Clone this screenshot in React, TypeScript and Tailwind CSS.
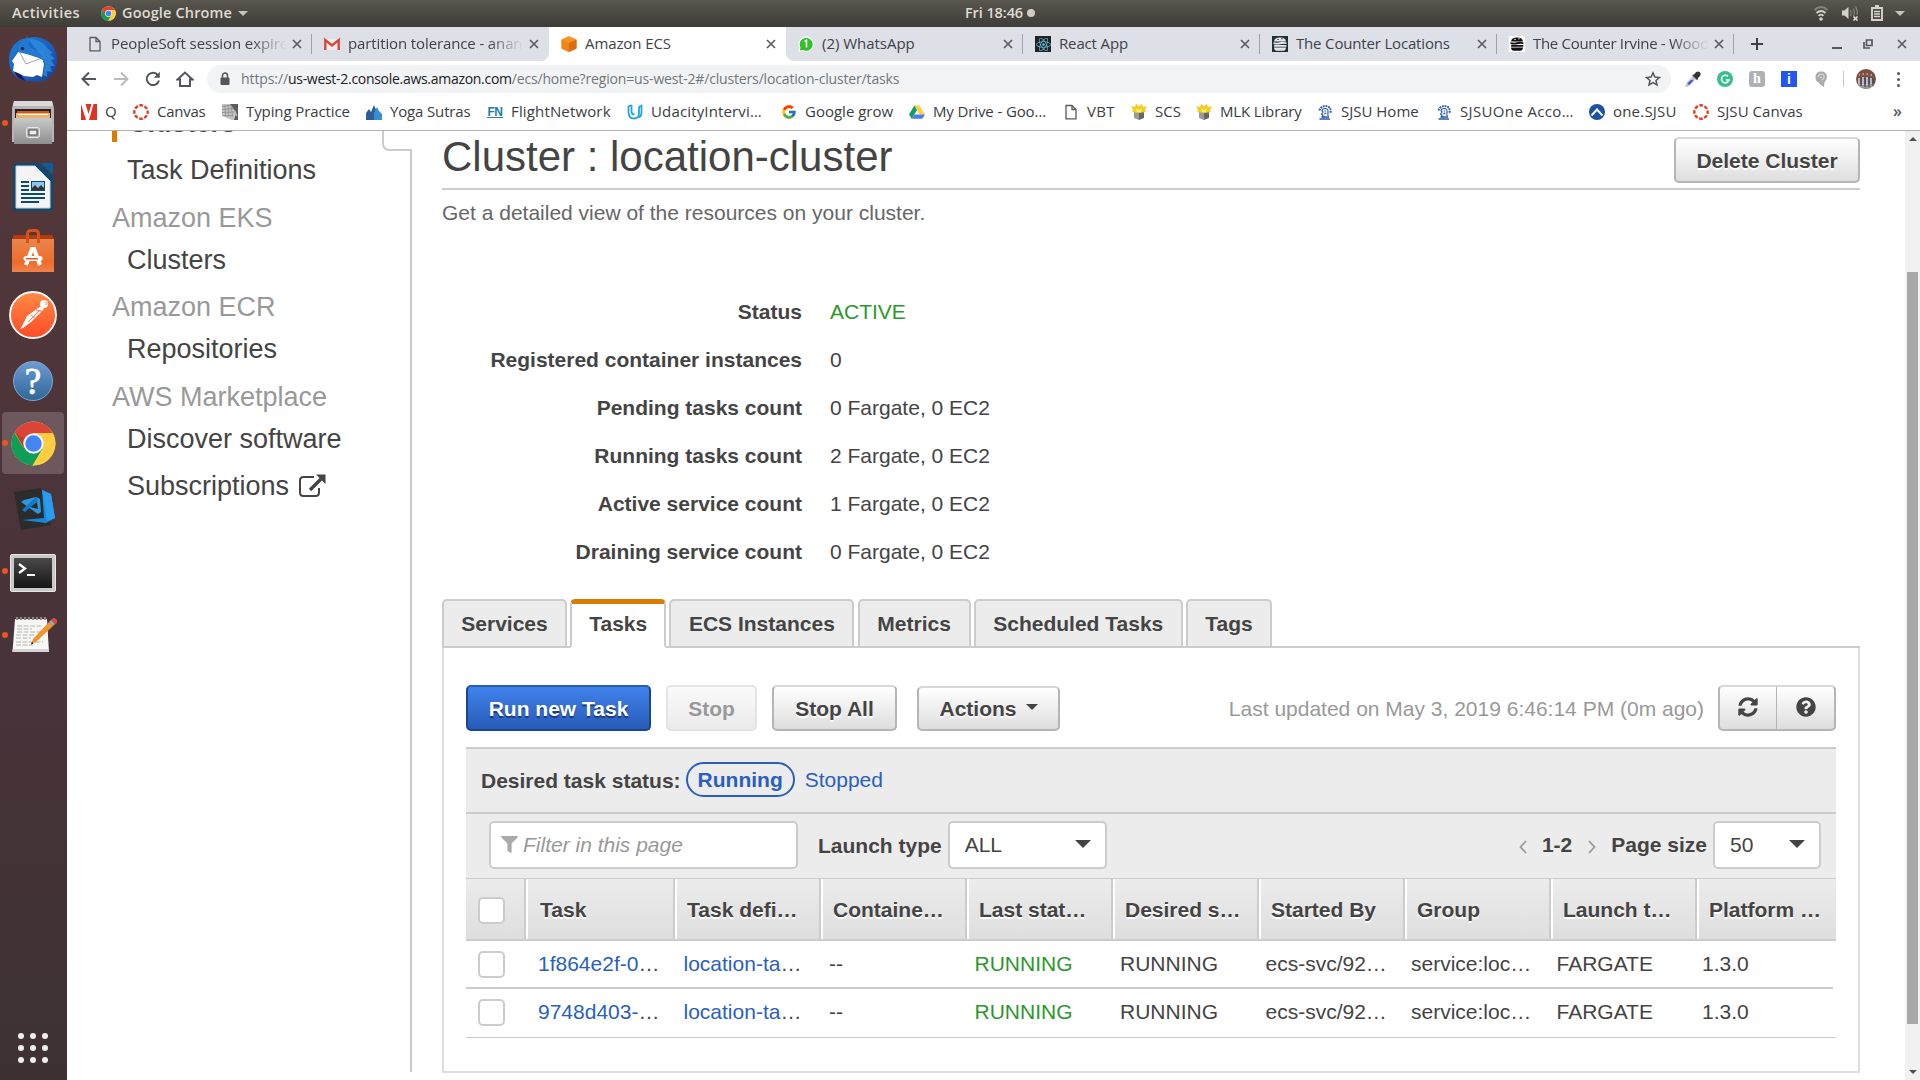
import React from "react";
import { FaFilter, FaQuestionCircle, FaSyncAlt, FaReact } from "react-icons/fa";
import { FcGoogle } from "react-icons/fc";

/* ---------- Icons ---------- */

const ChromeLogo = ({ className }: { className: string }) => (
  <svg viewBox="0 0 48 48" className={className}>
    <circle cx="24" cy="24" r="23.5" fill="#ffcd40" />
    <path d="M24 24 L3.6 12.3 A23.5 23.5 0 0 1 44.4 12.8 L24 12.8 Z" fill="#db4437" />
    <path d="M3.6 12.3 A23.5 23.5 0 0 0 23 47.5 L33.7 29.6 L24 24 L13.5 29 Z" fill="#0f9d58" />
    <path d="M24 12.8 H44.4 A23.5 23.5 0 0 1 23 47.5 L33.7 29.6 Z" fill="#ffcd40" />
    <path d="M4 12 L14 29.5 L24 24 Z" fill="#c33b2f" />
    <circle cx="24" cy="24" r="10.9" fill="#f4f4f4" />
    <circle cx="24" cy="24" r="8.7" fill="#4285f4" />
  </svg>
);

const Thunderbird = () => (
  <svg viewBox="0 0 48 48" className="size-12">
    <defs>
      <linearGradient id="tb" x1="0" y1="0" x2="1" y2="1">
        <stop offset="0" stopColor="#1b7fd6" />
        <stop offset="0.6" stopColor="#1c5dbd" />
        <stop offset="1" stopColor="#173b8c" />
      </linearGradient>
    </defs>
    <path d="M20 0 C18 1 17 2 17 3 C6 5 0 14 0 25 C0 36 6 42 12 45 L30 47 L34 44 L32 47 C42 44 48 35 48 25 C48 11 38 2 24 2 L17 3 Z" fill="url(#tb)" />
    <path d="M5 34 C6 41 10 44 17 46 C13 42 12 40 12 38 Z" fill="#26115c" />
    <path d="M10 16 L32 20 L35 29 L33 42 L28 40 L24 42 L15 41 L9 38 L4 36 L5 29 L3 26 Z" fill="#fff" />
    <path d="M10 16 L17 29 L33 23" fill="none" stroke="#9a9a9a" strokeWidth="0.9" />
    <path d="M9 17 C8 7 15 2 22 4 C17 8 19 13 30 16 C35 17 36 22 35 26 C30 22 20 20 9 17Z" fill="#2379d2" />
    <path d="M20 4 C30 4 36 9 39 14 L44 18 L41 19 L46 24 L42 25 L46 31 L41 31 L43 37 L38 36 L38 42 L34 40 L36 29 C35 18 24 14 20 4Z" fill="#2f8fdd" opacity="0.75" />
    <circle cx="13.5" cy="13.5" r="1.8" fill="#15304f" />
  </svg>
);

const Files = () => (
  <svg viewBox="0 0 42 44" className="h-11 w-[42px]">
    <defs>
      <linearGradient id="fi" x1="0" y1="0" x2="0" y2="1">
        <stop offset="0" stopColor="#c9c9c9" />
        <stop offset="1" stopColor="#8e8e8e" />
      </linearGradient>
    </defs>
    <path d="M2 0 H40 L42 7 V41 H0 V7 Z" fill="#b5b5b5" />
    <path d="M2 0 H40 L41 5 H1Z" fill="#dadada" />
    <rect x="3" y="8" width="36" height="10" fill="#222" />
    <rect x="5" y="10" width="32" height="8" fill="#d9531e" />
    <rect x="4" y="12" width="34" height="6" fill="#f0b26a" />
    <path d="M6 13.5H36" stroke="#fff" strokeWidth="1" />
    <rect x="2" y="17" width="38" height="26" fill="url(#fi)" />
    <rect x="14.5" y="26.500" width="13" height="10" rx="2" fill="#b4b4b4" stroke="#e9e9e9" />
    <rect x="17" y="29" width="8" height="5" fill="#eee" stroke="#444" />
  </svg>
);

const Writer = () => (
  <svg viewBox="0 0 40 48" className="h-12 w-10">
    <path d="M3 0 H26 L40 14 V45 a3 3 0 0 1 -3 3 H3 a3 3 0 0 1 -3 -3 V3 a3 3 0 0 1 3 -3Z" fill="#0b4a73" />
    <path d="M28 0 H40 V12 Z" fill="#0b5e97" />
    <path d="M3 3 H22 L37 18 V45 H3Z" fill="#f4f4f4" stroke="#cfcfcf" strokeWidth="1" />
    <rect x="18" y="18" width="14" height="10" fill="#0b4a73" />
    <rect x="19" y="19" width="12" height="8" fill="#8cc8ee" />
    <path d="M19 27 V25 L22 22 L25 25 L28 22 L31 25 V27Z" fill="#333" />
    <path d="M8 19H16 M8 23H16 M8 27H16 M8 31H32 M8 35H32 M8 39H26" stroke="#0b4a73" strokeWidth="1.8" />
  </svg>
);

const SoftwareCenter = () => (
  <svg viewBox="0 0 42 44" className="h-11 w-[42px]">
    <defs>
      <linearGradient id="sw" x1="0" y1="0" x2="0" y2="1">
        <stop offset="0" stopColor="#e8864a" />
        <stop offset="0.7" stopColor="#ee6c2c" />
        <stop offset="1" stopColor="#f0824a" />
      </linearGradient>
    </defs>
    <path d="M2 6 H40 L42 10 H0Z" fill="#b53c10" />
    <rect x="0" y="10" width="42" height="33" fill="url(#sw)" />
    <path d="M15.500 14 V5 q0 -3.500 3.500 -3.500 H23 q3.500 0 3.500 3.500 V14" fill="none" stroke="#d6521c" strokeWidth="3" />
    <path d="M14 36 L20 20 H22 L28 36" fill="none" stroke="#fff" strokeWidth="4" />
    <rect x="11.500" y="27" width="19" height="5" rx="2.500" fill="#fff" />
    <rect x="14" y="29" width="12" height="1.500" fill="#e65a1c" />
  </svg>
);

const Postman = () => (
  <svg viewBox="0 0 48 48" className="size-12">
    <defs>
      <linearGradient id="pm" x1="0" y1="0" x2="0" y2="1">
        <stop offset="0" stopColor="#ff8b45" />
        <stop offset="1" stopColor="#ff4b26" />
      </linearGradient>
    </defs>
    <circle cx="24" cy="24" r="23" fill="url(#pm)" stroke="#fff" strokeWidth="1.800" />
    <circle cx="35" cy="13" r="4" fill="#fff" />
    <path d="M36 10.500 L38 12.500 L36.500 14" stroke="#ff6c37" fill="none" />
    <path d="M32 15 L35 18 L22 31 L14 37 L11 38 L13 35 L18 25 Z" fill="#fff" />
    <path d="M31 19 L19 31 M27 19 L33 20 M22 24 L26 27" stroke="#ff6c37" strokeWidth="0.900" />
  </svg>
);

const Help = () => (
  <div className="mt-1 flex size-10 items-center justify-center rounded-full border border-[#7fa9d4] bg-linear-to-b from-[#6d9bd3] to-[#2c6797] font-['Liberation_Serif',serif] text-[37px] leading-none text-white [-webkit-text-stroke:0.8px_#fff]">
    ?
  </div>
);

const VSCode = () => (
  <svg viewBox="0 0 42 44" className="mt-1 ml-1 h-11 w-[42px]">
    <path d="M0 5 L27 1 L37 38 L7 43 Z" fill="#2c2c2d" />
    <path d="M28 3 L37 7 L41 31 L32 36 L8 33 L30 31 Z" fill="#1487dc" />
    <path d="M28 3 L37 7 L41 31 L33 34 Z" fill="#2b9bee" />
    <path d="M22 10 L26 12 L27 25 L24 27 L7 15 L10 13 Z M23 15 L16 20 L24 22Z" fill="#2c97e3" fillRule="evenodd" />
    <path d="M8 23 L22 10 L24 13 L11 25Z" fill="#1478c4" />
  </svg>
);

const Terminal = () => (
  <svg viewBox="0 0 46 38" className="mt-[3px] h-[38px] w-[46px]">
    <defs>
      <linearGradient id="te" x1="0" y1="0" x2="0" y2="1">
        <stop offset="0" stopColor="#4a4a4a" />
        <stop offset="1" stopColor="#151515" />
      </linearGradient>
    </defs>
    <rect x="0.500" y="0.500" width="45" height="37" rx="1.500" fill="#c9c9c9" stroke="#e6e6e6" />
    <rect x="4" y="4" width="38" height="30" fill="url(#te)" />
    <path d="M9 10 L15 14.500 L9 19" fill="none" stroke="#fff" strokeWidth="2.300" />
    <path d="M17 21H25" stroke="#fff" strokeWidth="2" />
  </svg>
);

const Notepad = () => (
  <svg viewBox="0 0 46 38" className="ml-0.5 h-[38px] w-[46px]">
    <path d="M4 3 H36 L38 36 H1.500 Z" fill="#f7f7f5" />
    <path d="M1.500 33 H38 V36 H1.500Z" fill="#d5d5d1" />
    <path d="M6 4V1 M10 4V1 M14 4V1 M18 4V1 M22 4V1 M26 4V1 M30 4V1 M34 4V1" stroke="#888" strokeWidth="2.200" />
    <path d="M6 10H31 M6 13H21 M6 16H32 M5 19H24 M5 22H20 M5 26H32 M5 29H22" stroke="#b4b4b4" strokeWidth="1" strokeDasharray="5 1.500" />
    <path d="M20 28 L22 23 L38 6 L42 10 L25 26 Z" fill="#f0942c" />
    <path d="M38 6 L40 4 L44 8 L42 10Z" fill="#aaa" />
    <path d="M40 4 q3 -4 6 0 q1 3 -2 4Z" fill="#dc4848" />
    <path d="M20 28.500 l1 -2.500 l1.500 1.500Z" fill="#111" />
  </svg>
);

const DocIcon = () => (
  <svg viewBox="0 0 16 16" className="size-4 shrink-0" fill="none" stroke="#5a5a5a" strokeWidth="1.300">
    <path d="M3 1.500 H9 L13 5.500 V14.800 H3Z M9 1.500 V5.500 H13" />
  </svg>
);
const GmailIcon = () => (
  <svg viewBox="0 0 16 16" className="size-4 shrink-0">
    <rect x="1" y="3" width="14" height="11" fill="#ededed" />
    <path d="M1.300 14 V4 L8 9.500 L14.700 4 V14" fill="none" stroke="#d54b3d" strokeWidth="2.400" />
  </svg>
);
const EcsIcon = () => (
  <svg viewBox="0 0 16 16" className="size-4 shrink-0">
    <path d="M8 0 L15.500 3.500 V12.500 L8 16 L0.500 12.500 V3.500Z" fill="#f7931e" />
    <path d="M0.500 3.500 L8 7 V16 L0.500 12.500Z" fill="#f08519" />
    <path d="M15.500 3.500 L8 7 V16 L15.500 12.500Z" fill="#dd6b10" />
  </svg>
);
const WhatsAppIcon = () => (
  <svg viewBox="0 0 16 16" className="size-4 shrink-0">
    <path d="M0.500 16 L1.500 11.500 A7.500 7.500 0 1 1 5 14.800Z" fill="#fff" />
    <path d="M1.800 14.500 L2.500 11.500 A6.500 6.500 0 1 1 5 14Z" fill="#33c02f" />
    <path d="M6.500 5.500 L8.500 4.300 V11.500" fill="none" stroke="#fff" strokeWidth="1.500" />
  </svg>
);
const ReactIcon = () => (
  <span className="flex size-4 shrink-0 items-center justify-center bg-[#222]">
    <FaReact className="size-[15px] text-[#61c5dd]" />
  </span>
);
const BurgerIcon = ({ dark }: { dark?: boolean }) => (
  <svg viewBox="0 0 16 16" className="size-4 shrink-0">
    <rect width="16" height="16" fill={dark ? "#22303a" : "#fff"} />
    <g fill={dark ? "#e8e8e8" : "#111"}>
      <path d="M2 5.500 Q2.500 1.500 8 1.500 Q13.500 1.500 14 5.500Z" />
      <path d="M1.500 6.300 Q5 7 8 6.200 T14.500 6.500 V8 Q11 7.500 8 8.200 T1.500 8Z" />
      <rect x="2" y="8.900" width="12.500" height="1.900" rx="0.900" />
      <path d="M2 11.500 H14 Q13.500 14.700 11.500 14.700 H4.500 Q2.500 14.700 2 11.500Z" />
    </g>
    <path d="M5 3.500 H7 M9 2.800 H11" stroke={dark ? "#22303a" : "#fff"} strokeWidth="0.700" />
  </svg>
);
const VIcon = () => (
  <svg viewBox="0 0 16 16" className="size-4 shrink-0">
    <rect width="16" height="16" fill="#e03224" />
    <path d="M0 0 H4.500 L7.500 10 L10.500 0 H12.500 L8 16 H5Z" fill="#fff" />
  </svg>
);
const CanvasIcon = () => (
  <svg viewBox="0 0 16 16" className="size-4 shrink-0">
    <circle cx="8" cy="8" r="6.700" fill="none" stroke="#dc4026" strokeWidth="2.400" strokeDasharray="3.700 1.560" strokeDashoffset="1.850" />
  </svg>
);
const TypingIcon = () => (
  <svg viewBox="0 0 16 16" className="size-4 shrink-0">
    <rect width="16" height="16" fill="#c4c4c4" />
    <path d="M8 0 H16 V16 L12 16 L14 10 L11 4Z" fill="#5b5b5b" />
    <path d="M0 2.500 L9 1 M0 5.500 L11 4.500 M0 8.500 L12 8 M1 11.500 L11 12" stroke="#8a8a8a" strokeWidth="0.900" />
    <path d="M3 1 L3.500 11 M6 1 L7 12 M9 1 L10.500 12" stroke="#8a8a8a" strokeWidth="0.700" />
    <path d="M0 12 L10 16 H0Z" fill="#fff" />
    <path d="M12.500 6 L15 12" stroke="#bdbdbd" strokeWidth="1.200" fill="none" />
  </svg>
);
const YogaIcon = () => (
  <svg viewBox="0 0 16 16" className="size-4 shrink-0">
    <path d="M0 16 V9 L3 5 L5 8 L8 1 L11 8 L13 16Z" fill="#2e5d98" />
    <path d="M8 16 V9 L11 3 L13 7 L16 10 V16Z" fill="#3590d0" />
  </svg>
);
const FnIcon = () => (
  <span className="flex h-3 w-4 shrink-0 items-center justify-center border-b border-[#2b7fa6] font-['Liberation_Sans',sans-serif] text-[12px] leading-none font-bold tracking-[-0.5px] text-[#217ca5]">
    FN
  </span>
);
const UdacityIcon = () => (
  <svg viewBox="0 0 16 16" className="size-4 shrink-0" fill="none" stroke="#1fa8de" strokeWidth="1.800">
    <path d="M4.500 1 L1.500 2.500 V8 Q1.500 14.500 7 14.500 Q12 14.500 12 9 V3 L14.500 1.800 V8.500 Q14.500 12 12 13.500" />
    <path d="M4.500 1 V7.500 Q4.500 10.500 7.500 10.500" />
  </svg>
);
const DriveIcon = () => (
  <svg viewBox="0 0 16 16" className="size-4 shrink-0">
    <path d="M5.300 1.500 H10.700 L16 10.500 H10.700Z" fill="#ffcf48" />
    <path d="M5.300 1.500 L0 10.500 L2.700 14.800 L8 6Z" fill="#12a05c" />
    <path d="M5.300 10.500 H16 L13.300 14.800 H2.700Z" fill="#4a7fe8" />
  </svg>
);
const ScsIcon = () => (
  <svg viewBox="0 0 16 16" className="size-4 shrink-0">
    <path d="M3 7 L8 9 V16 L3 14Z" fill="#999" />
    <path d="M13 7 L8 9 V16 L13 14Z" fill="#666" />
    <path d="M0 2 L4 3 L5 0 L8 2 L11 0 L12 3 L16 2 L14 6 L15 8 L8 9 L1 8 L2 6Z" fill="#f2cd25" />
    <path d="M5 4 L8 6 L11 4 L10 8 H6Z" fill="#fff06a" />
  </svg>
);
const SjsuIcon = () => (
  <svg viewBox="0 0 16 16" className="size-4 shrink-0" fill="none" stroke="#2a5ba5">
    <path d="M2.500 6.500 A6 5.500 0 0 1 13 4 Q14 6 13.500 10" strokeWidth="2" strokeDasharray="1.800 0.900" />
    <path d="M5 7 Q5 4.500 8 4.500 Q11.500 4.500 11 8.500 Q10.500 11 11.500 12.500 M5 7 L6 8 L4.500 10 L6 11 L5.500 13 H8 M7.500 7 H9 M7 10 Q9 10 9 8.500" strokeWidth="1.200" />
    <path d="M2.500 15 H13 M4.500 13 H12" strokeWidth="1.400" />
  </svg>
);
const OneIcon = () => (
  <svg viewBox="0 0 16 16" className="size-4 shrink-0">
    <circle cx="8" cy="8" r="8" fill="#1b52a4" />
    <path d="M2.500 11.500 L8 5.500 L13.500 11.500" fill="none" stroke="#fff" strokeWidth="2" />
  </svg>
);
const CloseX = ({ className = "" }: { className?: string }) => (
  <svg viewBox="0 0 10 10" className={`size-2.5 shrink-0 ${className}`} stroke="#5a5d61" strokeWidth="1.700">
    <path d="M1 1 L9 9 M9 1 L1 9" />
  </svg>
);

/* ---------- Desktop top bar ---------- */

const TopBar = () => (
  <header className="grid h-[27px] grid-cols-3 items-center bg-linear-to-b from-[#59564e] to-[#3e3c37] pb-px font-['Open_Sans',sans-serif] text-[14.5px] font-semibold text-[#dfdbd2]">
    <div className="flex items-center pl-3">
      <span className="w-[89px] tracking-[0.45px]">Activities</span>
      <ChromeLogo className="size-[15px]" />
      <span className="ml-1.5 tracking-[0.15px]">Google Chrome</span>
      <i className="ml-1.5 border-x-[5px] border-t-[5px] border-x-transparent border-t-[#c9c5bd]" />
    </div>
    <div className="flex items-center justify-center gap-1 pl-20 tracking-[-0.1px]">
      Fri 18:46
      <i className="size-2 rounded-full bg-[#cfccc5]" />
    </div>
    <div className="flex items-center justify-end pr-[15px]">
      <svg viewBox="0 0 16 16" className="mr-3 size-4" fill="none">
        <path d="M1.500 5 Q8 -1 14.500 5" stroke="#85827b" strokeWidth="1.800" />
        <path d="M3.500 8 Q8 4 12.500 8 M5.500 10.800 Q8 8.500 10.500 10.800" stroke="#d5d2cb" strokeWidth="1.800" />
        <circle cx="8" cy="14" r="1.800" fill="#d5d2cb" />
      </svg>
      <svg viewBox="0 0 18 16" className="mr-3 h-4 w-[18px]" fill="none">
        <path d="M1 5.500 H3.500 L7.500 2 V14 L3.500 10.500 H1Z" fill="#d5d2cb" />
        <path d="M9.500 5 Q11 8 9.500 11 M12 3.500 Q14.500 7 12.500 11 M14.500 1.500 Q17 6 16 10" stroke="#85827b" strokeWidth="1.200" />
        <path d="M12.500 11.500 L16.500 15.500 M16.500 11.500 L12.500 15.500" stroke="#e0ddd6" strokeWidth="1.600" />
      </svg>
      <svg viewBox="0 0 12 16" className="mr-3 h-4 w-3" fill="none" stroke="#d5d2cb">
        <path d="M4 1 H8 M1 3 H11 V15 H1Z" strokeWidth="1.900" />
        <path d="M3 6.500 H9 M3 9 H9 M3 11.500 H9" strokeWidth="1.300" />
      </svg>
      <i className="border-x-[5px] border-t-[5px] border-x-transparent border-t-[#c9c5bd]" />
    </div>
  </header>
);

/* ---------- Launcher ---------- */

const LAUNCHER: { icon: React.ReactNode; running?: boolean; active?: boolean }[] = [
  { icon: <Thunderbird /> },
  { icon: <Files />, running: true },
  { icon: <Writer /> },
  { icon: <SoftwareCenter /> },
  { icon: <Postman /> },
  { icon: <Help /> },
  { icon: <ChromeLogo className="size-[45px]" />, running: true, active: true },
  { icon: <VSCode /> },
  { icon: <Terminal />, running: true },
  { icon: <Notepad />, running: true },
];

const Launcher = () => (
  <nav className="flex w-[67px] shrink-0 flex-col justify-between bg-linear-to-b from-[#543839] via-[#48333a] via-60% to-[#3d3233] pt-px pb-[17px]">
    <ul className="flex flex-col gap-0.5">
      {LAUNCHER.map((l, i) => (
        <li
          key={i}
          className={`relative ml-0.5 flex h-[62px] w-[62px] items-center justify-center rounded ${l.active ? "bg-[#6d585e]" : ""}`}
        >
          {l.running && <i className="absolute top-[28px] left-0 size-1.5 rounded-full bg-[#e95420]" />}
          {l.icon}
        </li>
      ))}
    </ul>
    <div className="ml-[18px] grid w-[30px] grid-cols-3 gap-1.5">
      {Array.from({ length: 9 }, (_, i) => (
        <i key={i} className="size-1.5 rounded-full bg-[#eeeeec]" />
      ))}
    </div>
  </nav>
);

/* ---------- Browser ---------- */

const TABS: { icon: React.ReactNode; title: string; track: string; active?: boolean; fade?: boolean; sep?: boolean }[] = [
  { icon: <DocIcon />, title: "PeopleSoft session expire", track: "tracking-[-0.07px]", fade: true, sep: true },
  { icon: <GmailIcon />, title: "partition tolerance - anan", track: "tracking-[-0.12px]", fade: true },
  { icon: <EcsIcon />, title: "Amazon ECS", track: "tracking-[-0.1px]", active: true },
  { icon: <WhatsAppIcon />, title: "(2) WhatsApp", track: "tracking-[-0.03px]", sep: true },
  { icon: <ReactIcon />, title: "React App", track: "tracking-[-0.15px]", sep: true },
  { icon: <BurgerIcon dark />, title: "The Counter Locations", track: "tracking-[-0.17px]", sep: true },
  { icon: <BurgerIcon />, title: "The Counter Irvine - Wood", track: "tracking-[-0.3px]", fade: true, sep: true },
];

const TabStrip = () => (
  <div className="flex h-[34px] items-stretch bg-white">
    {TABS.map((t, i) => (
      <div
        key={t.title}
        className={`relative flex items-center pr-[10px] text-[15px] text-[#3f4246] ${i === 0 ? "w-[245px] pl-[20px]" : "w-[237px] pl-3"} ${
          t.active ? "rounded-t-lg bg-white" : "bg-[#dde0e7]"
        } ${i === 1 ? "rounded-br-lg" : ""} ${i === 3 ? "rounded-bl-lg" : ""}`}
      >
        {t.icon}
        <span
          className={`mb-px ml-2 min-w-0 flex-1 overflow-hidden whitespace-nowrap ${t.track} ${
            t.fade ? "mask-[linear-gradient(to_right,#000_80%,transparent)]" : ""
          }`}
        >
          {t.title}
        </span>
        <CloseX className="ml-1.5" />
        {t.sep && <i className="absolute top-[7px] right-0 h-5 w-px bg-[#a0a4aa]" />}
      </div>
    ))}
    <div className="flex flex-1 items-center bg-[#dde0e7] pl-[17px]">
      <svg viewBox="0 0 12 12" className="size-3" stroke="#3c3f43" strokeWidth="2">
        <path d="M6 0V12 M0 6H12" />
      </svg>
      <div className="ml-auto flex items-center pr-[13px]">
        <i className="mt-2 mr-[21px] h-0.5 w-[10px] bg-[#55585c]" />
        <svg viewBox="0 0 10 10" className="mr-6 size-2.5" fill="none" stroke="#55585c" strokeWidth="1.700">
          <path d="M3.500 1 H9 V6.500 H3.500Z M1 3 V9 H7" />
        </svg>
        <CloseX />
      </div>
    </div>
  </div>
);

const Toolbar = () => (
  <div className="flex h-[36px] items-center bg-white pl-[14px]">
    <svg viewBox="0 0 16 16" className="size-4" fill="none" stroke="#53565a" strokeWidth="2">
      <path d="M15 8 H2 M8 1.500 L1.500 8 L8 14.500" />
    </svg>
    <svg viewBox="0 0 16 16" className="ml-4 size-4" fill="none" stroke="#b8babd" strokeWidth="2">
      <path d="M1 8 H14 M8 1.500 L14.500 8 L8 14.500" />
    </svg>
    <svg viewBox="0 0 16 16" className="ml-4 size-4" fill="none" stroke="#53565a" strokeWidth="2">
      <path d="M13 4.200 A6.200 6.200 0 1 0 14 9.500" />
      <path d="M14.800 0.800 V6.800 H8.800Z" fill="#53565a" stroke="none" />
    </svg>
    <svg viewBox="0 0 18 16" className="ml-[15px] h-4 w-[18px]" fill="none" stroke="#53565a" strokeWidth="2">
      <path d="M1.500 8.500 L9 1.500 L16.500 8.500 H14 V15 H4 V8.500Z" />
    </svg>
    <div className="ml-[13px] flex h-7 w-[1464px] items-center rounded-full bg-[#f1f3f4] pr-[10px] pl-3">
      <svg viewBox="0 0 12 14" className="h-3.5 w-3">
        <rect x="1.500" y="5.500" width="9" height="7.500" rx="1" fill="#53565a" />
        <path d="M3.500 6 V3.500 a2.500 2.500 0 0 1 5 0 V6" fill="none" stroke="#53565a" strokeWidth="1.500" />
      </svg>
      <span className="mb-0.5 ml-[10px] text-[14px] whitespace-nowrap text-[#72777c]">
        <span className="tracking-[-0.1px]">https://</span>
        <span className="tracking-[-0.29px] text-[#202124]">us-west-2.console.aws.amazon.com</span>
        <span className="tracking-[-0.16px]">/ecs/home?region=us-west-2#/clusters/location-cluster/tasks</span>
      </span>
      <svg viewBox="0 0 16 16" className="ml-auto size-4" fill="none" stroke="#53565a" strokeWidth="1.500">
        <path d="M8 1.800 L9.900 6 L14.500 6.500 L11 9.500 L12 14 L8 11.600 L4 14 L5 9.500 L1.500 6.500 L6.100 6Z" />
      </svg>
    </div>
    <div className="ml-[14px] flex items-center gap-4">
      <svg viewBox="0 0 16 16" className="size-4">
        <path d="M8 5 L11 8 L4 15 L1 16 L0.500 15 L1.500 12Z" fill="#b9c0dc" />
        <path d="M2.500 12.500 L6 9 L8.500 9.500 L4 14Z" fill="#4b55c8" />
        <path d="M7 4 L9 3.500 Q12 -1 15 1.500 Q17 4 13 7 L12.500 9.500Z" fill="#333" />
      </svg>
      <span className="flex size-4 items-center justify-center rounded-full bg-[#3bbd92]">
        <svg viewBox="0 0 10 10" className="size-2.5" fill="none" stroke="#fff" strokeWidth="1.500">
          <path d="M8 2.300 A3.800 3.800 0 1 0 9 6 H6" />
        </svg>
      </span>
      <span className="flex size-4 items-center justify-center rounded-[3px] bg-[#b0b1b4] font-['Liberation_Serif',serif] text-[14px] leading-none font-bold text-white">
        h
      </span>
      <span className="flex size-4 items-center justify-center bg-[#2557f0] font-['Liberation_Sans',sans-serif] text-[14px] leading-none font-bold text-white">
        i
      </span>
      <svg viewBox="0 0 16 16" className="size-4">
        <path d="M8 0.500 Q14 0.500 14 6 Q14 9 11.500 11 L11 16 L6.500 13 L6 11.500 Q2.500 11 2.500 6 Q2.500 0.500 8 0.500Z" fill="#a9abad" />
        <path d="M5 6 Q6 3 8.500 3 Q11.500 3.500 11 6.500 Q10.500 9 8.500 9 M7 6.500 h2" fill="none" stroke="#d4d6d8" strokeWidth="1.200" />
      </svg>
    </div>
    <i className="ml-[14px] h-4 w-px bg-[#c6c8cb]" />
    <svg viewBox="0 0 20 20" className="ml-3 size-5">
      <defs>
        <clipPath id="av">
          <circle cx="10" cy="10" r="10" />
        </clipPath>
      </defs>
      <g clipPath="url(#av)">
        <rect width="20" height="20" fill="#7a5140" />
        <rect y="15" width="20" height="5" fill="#a09690" />
        <path d="M3 9 V15 M7 8 V16 M11 8 V16 M15 9 V15" stroke="#cfd3e2" strokeWidth="1.600" />
        <path d="M5 8 V17 M9 9 V18 M13 8 V18 M17 9 V17" stroke="#444c6a" strokeWidth="1.300" />
        <path d="M3 6 h1 M6.500 5 h1.500 M10.500 5 h1.500 M14.500 6 h1.500" stroke="#c99a80" strokeWidth="2.200" />
      </g>
    </svg>
    <div className="ml-[21px] flex flex-col gap-[3px]">
      <i className="size-[3px] rounded-full bg-[#53565a]" />
      <i className="size-[3px] rounded-full bg-[#53565a]" />
      <i className="size-[3px] rounded-full bg-[#53565a]" />
    </div>
  </div>
);

const GoogleIcon = () => <FcGoogle className="size-4 shrink-0" />;

const BOOKMARKS: { Icon: React.FC; label: string; cls: string }[] = [
  { Icon: VIcon, label: "Q", cls: "w-[52px]" },
  { Icon: CanvasIcon, label: "Canvas", cls: "w-[89px] tracking-[-0.25px]" },
  { Icon: TypingIcon, label: "Typing Practice", cls: "w-[144px] tracking-[-0.1px]" },
  { Icon: YogaIcon, label: "Yoga Sutras", cls: "w-[121px] tracking-[-0.15px]" },
  { Icon: FnIcon, label: "FlightNetwork", cls: "w-[140px] tracking-[0.15px]" },
  { Icon: UdacityIcon, label: "UdacityIntervi…", cls: "w-[154px] tracking-[0.15px]" },
  { Icon: GoogleIcon, label: "Google grow", cls: "w-[128px]" },
  { Icon: DriveIcon, label: "My Drive - Goo…", cls: "w-[154px] tracking-[-0.12px]" },
  { Icon: DocIcon, label: "VBT", cls: "w-[68px] tracking-[0.3px]" },
  { Icon: ScsIcon, label: "SCS", cls: "w-[65px]" },
  { Icon: ScsIcon, label: "MLK Library", cls: "w-[121px] tracking-[-0.15px]" },
  { Icon: SjsuIcon, label: "SJSU Home", cls: "w-[119px]" },
  { Icon: SjsuIcon, label: "SJSUOne Acco…", cls: "w-[153px] tracking-[0.35px]" },
  { Icon: OneIcon, label: "one.SJSU", cls: "w-[104px] tracking-[0.2px]" },
  { Icon: CanvasIcon, label: "SJSU Canvas", cls: "w-[150px] tracking-[0.05px]" },
];

const Bookmarks = () => (
  <div className="flex h-[34px] items-center border-b border-[#b0b1b3] bg-white pr-[18px] pb-[3px] pl-[14px] text-[15px] text-[#3a3d41]">
    {BOOKMARKS.map((b) => (
      <div key={b.label} className={`flex shrink-0 items-center gap-2 whitespace-nowrap ${b.cls}`}>
        <b.Icon />
        <span className="mb-0.5">{b.label}</span>
      </div>
    ))}
    <span className="mb-0.5 ml-auto text-[16px] leading-none font-semibold text-[#55585c]">»</span>
  </div>
);

/* ---------- Page ---------- */

const SideNav = () => (
  <div className="flex w-[345px] shrink-0 overflow-hidden">
    <ul className="-mt-[28px] w-[315px] pl-[45px] text-[27px] leading-[40px] whitespace-nowrap text-[#444]">
      <li className="relative h-10 pl-4 font-bold">
        <i className="absolute top-0 left-0 h-[39px] w-[5px] bg-[#d97d00]" />
        Clusters
      </li>
      <li className="mt-[7px] pl-[15px]">Task Definitions</li>
      <li className="mt-2 text-[#999]">Amazon EKS</li>
      <li className="mt-0.5 pl-[15px]">Clusters</li>
      <li className="mt-[7px] text-[#999]">Amazon ECR</li>
      <li className="mt-0.5 pl-[15px]">Repositories</li>
      <li className="mt-2 text-[#999]">AWS Marketplace</li>
      <li className="mt-0.5 pl-[15px]">Discover software</li>
      <li className="mt-[7px] flex items-center gap-[9px] pl-[15px]">
        Subscriptions
        <svg viewBox="0 0 28 24" className="h-6 w-7" fill="none" stroke="#444" strokeWidth="2">
          <path d="M16 3 H5.500 Q2 3 2 6.500 V18.500 Q2 22 5.500 22 H17.500 Q21 22 21 18.500 V14" />
          <path d="M12 16 L23 5" strokeWidth="3.400" />
          <path d="M18 0.500 H27.500 V10Z" fill="#444" stroke="none" />
        </svg>
      </li>
    </ul>
    <div className="flex w-[30px] flex-col">
      <div className="h-5 rounded-bl-[7px] border-b-2 border-l-2 border-[#ccc]" />
      <div className="h-[921px] border-r-2 border-[#ccc]" />
    </div>
  </div>
);

const BTN =
  "flex items-center justify-center rounded-[5px] border-2 border-[#b5b5b5] border-t-[#d8d8d8] bg-linear-to-b from-white to-[#dedede] pt-px font-bold text-[#444] [text-shadow:0_2px_1px_#fff]";

const STATS: [string, string][] = [
  ["Status", "ACTIVE"],
  ["Registered container instances", "0"],
  ["Pending tasks count", "0 Fargate, 0 EC2"],
  ["Running tasks count", "2 Fargate, 0 EC2"],
  ["Active service count", "1 Fargate, 0 EC2"],
  ["Draining service count", "0 Fargate, 0 EC2"],
];

const PAGE_TABS: { label: string; cls: string }[] = [
  { label: "Services", cls: "w-[125px]" },
  { label: "Tasks", cls: "w-[96px]" },
  { label: "ECS Instances", cls: "w-[185px]" },
  { label: "Metrics", cls: "w-[113px]" },
  { label: "Scheduled Tasks", cls: "w-[209px]" },
  { label: "Tags", cls: "w-[86px]" },
];

const HEADERS = ["Task defi…", "Containe…", "Last stat…", "Desired s…", "Started By", "Group", "Launch t…", "Platform …"];
const ROWS = ["1f864e2f-0", "9748d403-"];

const Check = () => <i className="size-[27px] shrink-0 rounded-[5px] border-2 border-[#ccc] bg-white" />;
const Caret = ({ className = "" }: { className?: string }) => (
  <i className={`border-x-[8px] border-t-[8px] border-x-transparent border-t-[#444] ${className}`} />
);

const TaskTable = () => (
  <section className="mt-4 border-t-2 border-[#ccc] text-[21px] text-[#444]">
    <div className="flex h-[65px] items-center border-b-2 border-[#ccc] bg-[#ececec] pl-[15px]">
      <span className="font-bold">Desired task status:</span>
      <span className="mb-0.5 ml-[5px] flex h-[35px] items-center rounded-[18px] border-2 border-[#2a5fbd] px-[10px] font-bold text-[#2a5fbd]">
        Running
      </span>
      <span className="mb-0.5 ml-[10px] text-[#2a5fbd]">Stopped</span>
    </div>
    <div className="flex h-[65px] items-center border-b border-[#ccc] bg-[#ececec] pr-[15px] pb-px pl-[23px]">
      <div className="mb-0.5 flex h-12 w-[309px] items-center rounded-[5px] border-2 border-[#ccc] bg-white pl-2.5 text-[#999] italic">
        <FaFilter className="mr-[5px] size-[17px] text-[#aaa]" />
        Filter in this page
      </div>
      <span className="ml-5 font-bold">Launch type</span>
      <div className="mb-0.5 ml-1.5 flex h-12 w-[159px] items-center justify-between rounded-[5px] border-2 border-[#ccc] bg-white pr-[14px] pl-[15px]">
        ALL
        <Caret className="mb-0.5" />
      </div>
      <div className="mb-0.5 ml-auto flex items-center">
        <svg viewBox="0 0 8 14" className="mt-1 mr-[15px] h-3.5 w-2" fill="none" stroke="#999" strokeWidth="1.800">
          <path d="M7 1 L1.500 7 L7 13" />
        </svg>
        <span className="font-bold">1-2</span>
        <svg viewBox="0 0 8 14" className="mt-1 ml-[16px] h-3.5 w-2" fill="none" stroke="#999" strokeWidth="1.800">
          <path d="M1 1 L6.500 7 L1 13" />
        </svg>
        <span className="ml-[15px] font-bold">Page size</span>
        <div className="ml-1.5 flex h-12 w-[108px] items-center justify-between rounded-[5px] border-2 border-[#ccc] bg-white pr-[14px] pl-[15px]">
          50
          <Caret className="mb-0.5" />
        </div>
      </div>
    </div>
    <div className="flex h-[62px] items-stretch border-b-2 border-[#ccc] bg-linear-to-b from-[#ececec] to-[#dedede] font-bold [text-shadow:0_2px_0_#fff]">
      <div className="flex w-[60px] items-center border-r-2 border-[#ccc] pt-0.5 pl-3">
        <Check />
      </div>
      <div className="flex w-[149px] items-center border-r-2 border-l-2 border-r-[#ccc] border-l-white pt-0.5 pl-3">Task</div>
      {HEADERS.map((h, i) => (
        <div
          key={h}
          className={`flex items-center border-l-2 border-l-white pt-0.5 pl-[10px] whitespace-nowrap ${
            i < HEADERS.length - 1 ? "w-[146px] border-r-2 border-r-[#ccc]" : "flex-1"
          }`}
        >
          {h}
        </div>
      ))}
    </div>
    {ROWS.map((id, i) => (
      <div
        key={id}
        className={`flex items-center border-[#ccc] ${i === 0 ? "mr-[3px] h-12 border-b-2" : "h-[49px] border-b pb-0.5"}`}
      >
        <div className="flex w-[72px] pl-3">
          <Check />
        </div>
        <div className="w-[145.500px]">
          <span className="text-[#2a5fbd]">{id}</span>…
        </div>
        <div className="w-[145.500px]">
          <span className="text-[#2a5fbd]">location-ta</span>…
        </div>
        <div className="w-[145.500px]">--</div>
        <div className="w-[145.500px] text-[#2b982b]">RUNNING</div>
        <div className="w-[145.500px]">RUNNING</div>
        <div className="w-[145.500px]">ecs-svc/92…</div>
        <div className="w-[145.500px]">service:loc…</div>
        <div className="w-[145.500px]">FARGATE</div>
        <div>1.3.0</div>
      </div>
    ))}
  </section>
);

const Page = () => (
  <main className="flex flex-1 overflow-hidden bg-white font-['Liberation_Sans',Arial,sans-serif] text-[#444]">
    <SideNav />
    <div className="ml-[30px] w-[1418px]">
      <div className="flex h-[59px] items-start justify-between border-b-2 border-[#ccc]">
        <h1 className="text-[42px] leading-[51px]">Cluster : location-cluster</h1>
        <button className={`mt-1.5 h-[46px] w-[186px] text-[21px] ${BTN}`}>Delete Cluster</button>
      </div>
      <p className="text-[21px] leading-[46px] text-[#666]">Get a detailed view of the resources on your cluster.</p>
      <dl className="mt-[52px] grid grid-cols-[360px_1fr] gap-x-7 text-[21px] leading-[48px]">
        {STATS.map(([k, v]) => (
          <React.Fragment key={k}>
            <dt className="text-right font-bold whitespace-nowrap">{k}</dt>
            <dd className={v === "ACTIVE" ? "text-[#2b982b]" : ""}>{v}</dd>
          </React.Fragment>
        ))}
      </dl>
      <div className="mt-[23px] flex h-[49px] items-stretch text-[21px] font-bold">
        {PAGE_TABS.map((t, i) => (
          <React.Fragment key={t.label}>
            <div
              className={`flex shrink-0 items-center justify-center rounded-t-[5px] border-2 border-[#ccc] whitespace-nowrap ${t.cls} ${
                t.label === "Tasks" ? "border-t-[5px] border-t-[#d97d00] border-b-white bg-white pb-[3px]" : "bg-[#ececec]"
              }`}
            >
              {t.label}
            </div>
            {i < PAGE_TABS.length - 1 && <i className="w-[3.2px] shrink-0 border-b-2 border-[#ccc]" />}
          </React.Fragment>
        ))}
        <i className="flex-1 border-b-2 border-[#ccc]" />
      </div>
      <div className="h-[425px] border-x-2 border-b-2 border-[#ddd] px-[22px] pt-[37px]">
        <div className="flex h-[46px] items-end text-[21px]">
          <button className="flex h-[46px] w-[185px] items-center justify-center rounded-[5px] border-2 border-[#1c458f] border-t-[#2a5cb5] bg-linear-to-b from-[#4182ec] to-[#285cb8] pt-0.5 font-bold text-white [text-shadow:0_2px_1px_#1a3870]">
            Run new Task
          </button>
          <button className="ml-[15px] flex h-[46px] w-[91px] items-center justify-center rounded-[5px] border-2 border-[#e4e4e4] bg-linear-to-b from-[#fafafa] to-[#ebebeb] pt-0.5 font-bold text-[#999]">
            Stop
          </button>
          <button className={`ml-[15px] h-[46px] w-[125px] ${BTN}`}>Stop All</button>
          <button className={`ml-5 h-[45px] w-[143px] ${BTN}`}>
            Actions
            <i className="mb-1 ml-[9px] border-x-[6px] border-t-[6px] border-x-transparent border-t-[#444]" />
          </button>
          <span className="ml-auto leading-[45px] text-[#999]">Last updated on May 3, 2019 6:46:14 PM (0m ago)</span>
          <div className="ml-[14px] flex">
            <button className={`h-[46px] w-[60px] rounded-r-none ${BTN}`}>
              <FaSyncAlt className="mb-1 size-5" />
            </button>
            <button className={`-ml-px h-[46px] w-[59px] rounded-l-none border-l-0 ${BTN}`}>
              <FaQuestionCircle className="mb-1 size-5" />
            </button>
          </div>
        </div>
        <TaskTable />
      </div>
    </div>
    <div className="ml-auto flex w-[15px] flex-col items-center bg-[#f1f1f1] py-1.5">
      <i className="border-x-[4px] border-b-[4px] border-x-transparent border-b-[#505050]" />
      <i className="mt-[131px] h-[752px] w-[11px] bg-[#a8a8a8]" />
      <i className="mt-auto border-x-[4px] border-t-[4px] border-x-transparent border-t-[#505050]" />
    </div>
  </main>
);

export default function App() {
  return (
    <div className="flex h-[1080px] w-[1920px] flex-col overflow-hidden bg-white">
      <TopBar />
      <div className="flex min-h-0 flex-1">
        <Launcher />
        <div className="flex min-w-0 flex-1 flex-col font-['Open_Sans',sans-serif]">
          <TabStrip />
          <Toolbar />
          <Bookmarks />
          <Page />
        </div>
      </div>
    </div>
  );
}
